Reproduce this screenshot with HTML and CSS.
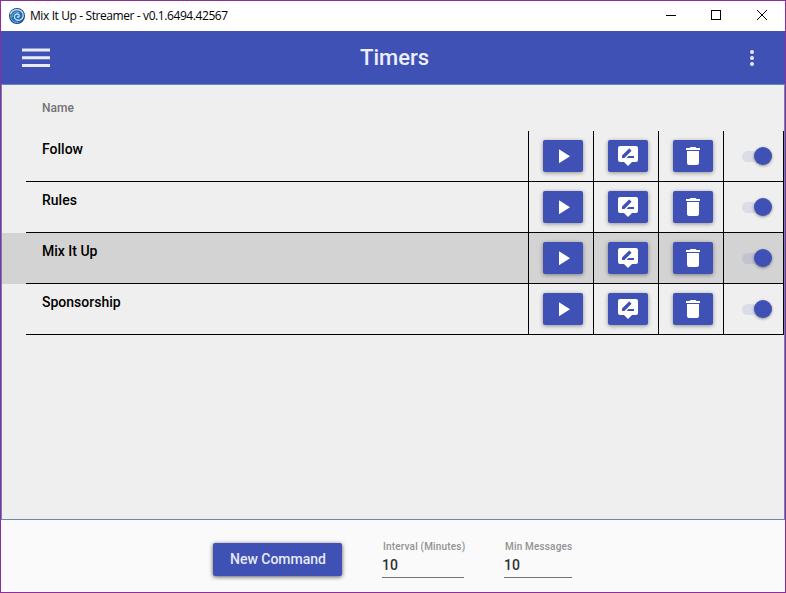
FILE: index.html
```html
<!DOCTYPE html>
<html lang="en">
<head>
<meta charset="utf-8">
<title>Mix It Up - Streamer - v0.1.6494.42567</title>
<link rel="stylesheet" href="styles.css">
</head>
<body>
<svg class="defs" width="0" height="0">
  <symbol id="play" viewBox="0 0 24 24"><path d="M8 5.14V19.14L19 12.14Z"/></symbol>
  <symbol id="edit" viewBox="0 0 24 24"><path fill-rule="evenodd" d="M20 2H4A2 2 0 0 0 2 4V16A2 2 0 0 0 4 18H8L12 22L16 18H20A2 2 0 0 0 22 16V4A2 2 0 0 0 20 2ZM6 14V11.5L12.88 4.65C13.07 4.45 13.39 4.45 13.59 4.65L15.35 6.41C15.55 6.61 15.55 6.92 15.35 7.12L8.47 14ZM18 14H10.5L12.5 12H18Z"/></symbol>
  <symbol id="trash" viewBox="0 0 24 24"><path d="M19 4H15.5L14.5 3H9.5L8.5 4H5V6H19ZM6 19A2 2 0 0 0 8 21H16A2 2 0 0 0 18 19V7H6Z"/></symbol>
</svg>
<div class="window">
  <header class="titlebar">
    <svg class="logo" viewBox="0 0 16 16">
      <circle cx="8" cy="8" r="8" fill="#1d4480"/>
      <circle cx="8" cy="8.6" r="6.6" fill="#1f6fb2"/>
      <g fill="none" stroke-linecap="round">
        <path d="M1.5 6C3 1.5 9 .3 12.5 3.3C15.5 6 14.5 11 11 12C8 12.9 5 11 5.4 8.3C5.8 6 8.8 5.2 10 7C10.8 8.3 9.5 9.6 8.3 9" stroke="#d3e6f4" stroke-width="1.3"/>
        <path d="M1.6 8C1.6 12 4.5 14.6 8.5 14.3M3 8.5C3.4 5 7 3 10 4.5" stroke="#79b9e2" stroke-width="1"/>
      </g>
    </svg>
    <span class="caption">Mix It Up - Streamer - v0.1.6494.42567</span>
    <svg class="controls" viewBox="0 0 120 30" fill="none" stroke="#000">
      <path d="M1 14.5H11M46.5 9.5H55.5V18.5H46.5Z" shape-rendering="crispEdges"/>
      <path d="M92 9L102 19M102 9L92 19"/>
    </svg>
  </header>
  <div class="appbar">
    <svg class="menu" viewBox="0 0 28 20"><path d="M0 .5H28V3.5H0ZM0 8.2H28V11.2H0ZM0 16H28V19H0Z"/></svg>
    <h1>Timers</h1>
    <svg class="more" viewBox="0 0 4 16"><circle cx="2" cy="2" r="2"/><circle cx="2" cy="8" r="2"/><circle cx="2" cy="14" r="2"/></svg>
  </div>
  <main>
    <div class="head">Name</div>
    <div class="row"><div class="cells">
      <div class="name">Follow</div>
      <div class="cell"><button><svg><use href="#play"/></svg></button></div>
      <div class="cell"><button><svg><use href="#edit"/></svg></button></div>
      <div class="cell"><button><svg><use href="#trash"/></svg></button></div>
      <div class="cell last"><span class="toggle"></span></div>
    </div></div>
    <div class="row"><div class="cells">
      <div class="name">Rules</div>
      <div class="cell"><button><svg><use href="#play"/></svg></button></div>
      <div class="cell"><button><svg><use href="#edit"/></svg></button></div>
      <div class="cell"><button><svg><use href="#trash"/></svg></button></div>
      <div class="cell last"><span class="toggle"></span></div>
    </div></div>
    <div class="row selected"><div class="cells">
      <div class="name">Mix It Up</div>
      <div class="cell"><button><svg><use href="#play"/></svg></button></div>
      <div class="cell"><button><svg><use href="#edit"/></svg></button></div>
      <div class="cell"><button><svg><use href="#trash"/></svg></button></div>
      <div class="cell last"><span class="toggle"></span></div>
    </div></div>
    <div class="row"><div class="cells">
      <div class="name">Sponsorship</div>
      <div class="cell"><button><svg><use href="#play"/></svg></button></div>
      <div class="cell"><button><svg><use href="#edit"/></svg></button></div>
      <div class="cell"><button><svg><use href="#trash"/></svg></button></div>
      <div class="cell last"><span class="toggle"></span></div>
    </div></div>
  </main>
  <footer>
    <button class="new">New Command</button>
    <div class="field interval"><label>Interval (Minutes)</label><div class="value">10</div></div>
    <div class="field messages"><label>Min Messages</label><div class="value">10</div></div>
  </footer>
</div>
</body>
</html>
```
FILE: styles.css
```css
* { box-sizing: border-box; }
body { margin: 0; font-family: Roboto, sans-serif; }
.defs { position: absolute; }
.window {
  width: 786px;
  height: 593px;
  border: 1px solid #8f2c9e;
  display: flex;
  flex-direction: column;
  background: #fafafa;
  overflow: hidden;
}
.titlebar {
  height: 30px;
  flex: none;
  display: flex;
  align-items: center;
  padding-left: 8px;
  background: #fff;
}
.logo { width: 16px; height: 16px; margin-top: -1px; }
.caption {
  margin-left: 5px;
  font: 12px/16px "Open Sans", "Noto Sans", sans-serif;
  letter-spacing: -0.42px;
  word-spacing: 0.1px;
  white-space: nowrap;
}
.controls { width: 120px; height: 30px; margin-left: auto; }
.appbar {
  height: 53px;
  flex: none;
  display: grid;
  grid-template-columns: 100px 1fr 100px;
  align-items: center;
  padding: 0 31px 0 20px;
  background: #3f51b5;
}
.appbar svg { fill: #e8eaf6; }
.menu { width: 28px; height: 20px; margin-left: 0.5px; }
.more { width: 4px; height: 16px; justify-self: end; }
h1 {
  margin: 1px 0 0 14px;
  text-align: center;
  font-size: 22px;
  line-height: 28px;
  font-weight: 500;
  color: #eceef8;
}
main {
  height: 436px;
  flex: none;
  border: 1px solid #6688b0;
  background: #efefef;
}
.head {
  height: 46px;
  padding: 15px 0 0 40px;
  font-size: 12px;
  line-height: 16px;
  font-weight: 500;
  color: #737373;
}
.row { height: 51px; padding-left: 24px; }
.row.selected { background: #d3d3d3; }
.cells {
  height: 51px;
  display: grid;
  grid-template-columns: 503px 65px 65px 65px 60px;
  border-bottom: 1px solid #000;
}
.name {
  padding: 9px 0 0 16px;
  font-size: 14px;
  line-height: 18px;
  font-weight: 500;
  color: #000;
  border-right: 1px solid #000;
}
.cell { padding: 9px 0 0 14px; border-right: 1px solid #000; }
button {
  display: block;
  width: 40px;
  height: 32px;
  padding: 0;
  border: 0;
  border-radius: 2px;
  background: #3f51b5;
  box-shadow: 0 1px 4px rgba(0, 0, 0, 0.4);
}
button svg {
  display: block;
  width: 24px;
  height: 24px;
  margin: 0 auto;
  fill: #fff;
}
.cell.last { padding: 20px 0 0 18px; }
.toggle {
  display: block;
  width: 26px;
  height: 11px;
  border-radius: 6px;
  background: rgba(63, 81, 181, 0.12);
  position: relative;
}
.toggle::after {
  content: "";
  position: absolute;
  left: 12.3px;
  top: -3.7px;
  width: 18px;
  height: 18px;
  border-radius: 50%;
  background: #3f51b5;
  box-shadow: 0 1px 3px rgba(0, 0, 0, 0.4);
}
footer { flex: 1; display: flex; padding: 20px 0 0 211.5px; }
.new {
  width: 129px;
  height: 33px;
  margin-top: 3px;
  padding-left: 2px;
  font: 500 14px/33px Roboto, sans-serif;
  color: #e8eaf6;
  box-shadow: 0 1px 4px rgba(0, 0, 0, 0.65);
}
.field { height: 38px; border-bottom: 1px solid #737373; }
.interval { width: 82px; margin-left: 40.5px; }
.messages { width: 68px; margin-left: 40px; }
.field label {
  display: block;
  padding-left: 1px;
  font-size: 10px;
  line-height: 14px;
  font-weight: 500;
  letter-spacing: 0.17px;
  color: #929292;
  white-space: nowrap;
}
.value { font-size: 14px; line-height: 18px; font-weight: 500; color: #303030; padding-top: 2px; }
```
